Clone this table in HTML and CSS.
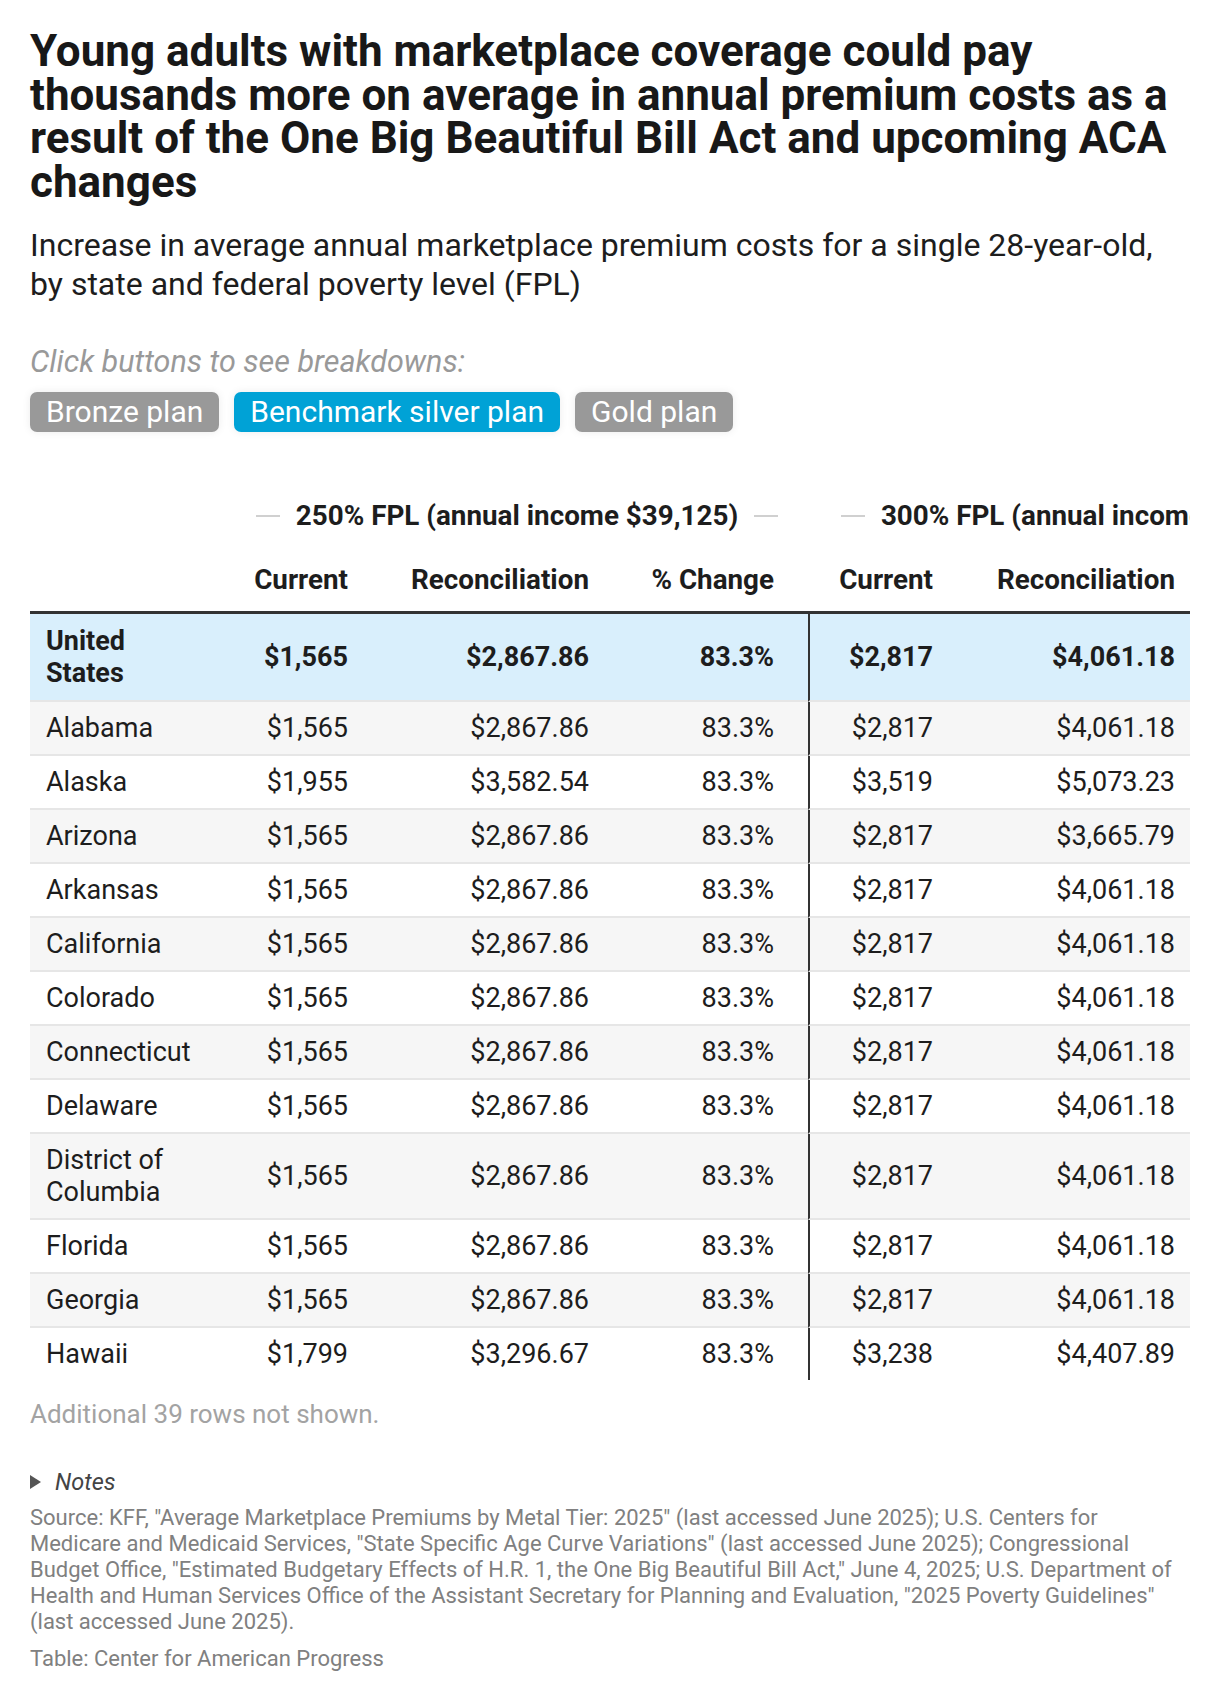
FILE: index.html
```html
<!DOCTYPE html>
<html lang="en">
<head>
<meta charset="utf-8">
<title>Young adults marketplace premiums</title>
<link rel="stylesheet" href="styles.css">
</head>
<body>
<div class="page">
  <h1 class="title">Young adults with marketplace coverage could pay thousands more on average in annual premium costs as a result of the One Big Beautiful Bill Act and upcoming ACA changes</h1>
  <p class="subtitle">Increase in average annual marketplace premium costs for a single 28-year-old, by state and federal poverty level (FPL)</p>

  <p class="hint">Click buttons to see breakdowns:</p>
  <div class="buttons">
    <span class="btn">Bronze plan</span>
    <span class="btn btn-active">Benchmark silver plan</span>
    <span class="btn">Gold plan</span>
  </div>

  <div class="table-wrap">
    <table class="data">
      <colgroup>
        <col class="w0"><col class="w1"><col class="w2"><col class="w3"><col class="w4"><col class="w5"><col class="w6">
      </colgroup>
      <thead>
        <tr class="group-row">
          <th></th>
          <th colspan="3" class="group"><span class="group-inner"><span class="dash"></span><span>250% FPL (annual income $39,125)</span><span class="dash"></span></span></th>
          <th colspan="3" class="group"><span class="group-inner"><span class="dash"></span><span>300% FPL (annual income $46,950)</span><span class="dash"></span></span></th>
        </tr>
        <tr class="head-row">
          <th></th>
          <th class="num">Current</th>
          <th class="num">Reconciliation</th>
          <th class="num c3">% Change</th>
          <th class="num">Current</th>
          <th class="num">Reconciliation</th>
          <th class="num c3"></th>
        </tr>
      </thead>
      <tbody>
        <tr class="us"><td class="state">United States</td><td class="num">$1,565</td><td class="num">$2,867.86</td><td class="num c3">83.3%</td><td class="num div">$2,817</td><td class="num">$4,061.18</td><td class="num c3"></td></tr>
        <tr class="odd"><td class="state">Alabama</td><td class="num">$1,565</td><td class="num">$2,867.86</td><td class="num c3">83.3%</td><td class="num div">$2,817</td><td class="num">$4,061.18</td><td class="num c3"></td></tr>
        <tr><td class="state">Alaska</td><td class="num">$1,955</td><td class="num">$3,582.54</td><td class="num c3">83.3%</td><td class="num div">$3,519</td><td class="num">$5,073.23</td><td class="num c3"></td></tr>
        <tr class="odd"><td class="state">Arizona</td><td class="num">$1,565</td><td class="num">$2,867.86</td><td class="num c3">83.3%</td><td class="num div">$2,817</td><td class="num">$3,665.79</td><td class="num c3"></td></tr>
        <tr><td class="state">Arkansas</td><td class="num">$1,565</td><td class="num">$2,867.86</td><td class="num c3">83.3%</td><td class="num div">$2,817</td><td class="num">$4,061.18</td><td class="num c3"></td></tr>
        <tr class="odd"><td class="state">California</td><td class="num">$1,565</td><td class="num">$2,867.86</td><td class="num c3">83.3%</td><td class="num div">$2,817</td><td class="num">$4,061.18</td><td class="num c3"></td></tr>
        <tr><td class="state">Colorado</td><td class="num">$1,565</td><td class="num">$2,867.86</td><td class="num c3">83.3%</td><td class="num div">$2,817</td><td class="num">$4,061.18</td><td class="num c3"></td></tr>
        <tr class="odd"><td class="state">Connecticut</td><td class="num">$1,565</td><td class="num">$2,867.86</td><td class="num c3">83.3%</td><td class="num div">$2,817</td><td class="num">$4,061.18</td><td class="num c3"></td></tr>
        <tr><td class="state">Delaware</td><td class="num">$1,565</td><td class="num">$2,867.86</td><td class="num c3">83.3%</td><td class="num div">$2,817</td><td class="num">$4,061.18</td><td class="num c3"></td></tr>
        <tr class="odd"><td class="state">District of Columbia</td><td class="num">$1,565</td><td class="num">$2,867.86</td><td class="num c3">83.3%</td><td class="num div">$2,817</td><td class="num">$4,061.18</td><td class="num c3"></td></tr>
        <tr><td class="state">Florida</td><td class="num">$1,565</td><td class="num">$2,867.86</td><td class="num c3">83.3%</td><td class="num div">$2,817</td><td class="num">$4,061.18</td><td class="num c3"></td></tr>
        <tr class="odd"><td class="state">Georgia</td><td class="num">$1,565</td><td class="num">$2,867.86</td><td class="num c3">83.3%</td><td class="num div">$2,817</td><td class="num">$4,061.18</td><td class="num c3"></td></tr>
        <tr class="last"><td class="state">Hawaii</td><td class="num">$1,799</td><td class="num">$3,296.67</td><td class="num c3">83.3%</td><td class="num div">$3,238</td><td class="num">$4,407.89</td><td class="num c3"></td></tr>
      </tbody>
    </table>
  </div>

  <p class="more">Additional 39 rows not shown.</p>

  <div class="notes"><span class="tri"></span><span>Notes</span></div>
  <p class="source">Source: KFF, "Average Marketplace Premiums by Metal Tier: 2025" (last accessed June 2025); U.S. Centers for Medicare and Medicaid Services, "State Specific Age Curve Variations" (last accessed June 2025); Congressional Budget Office, "Estimated Budgetary Effects of H.R. 1, the One Big Beautiful Bill Act," June 4, 2025; U.S. Department of Health and Human Services Office of the Assistant Secretary for Planning and Evaluation, "2025 Poverty Guidelines" (last accessed June 2025).</p>
  <p class="credit">Table: Center for American Progress</p>
</div>
</body>
</html>
```
FILE: styles.css
```css
html, body {
  margin: 0;
  padding: 0;
  background: #ffffff;
}

body {
  font-family: Roboto, "Liberation Sans", Arial, sans-serif;
  color: #1d1d1d;
}

.page {
  padding: 30px 30px 20px 30px;
}

.title {
  margin: 0;
  font-size: 44px;
  line-height: 43.5px;
  font-weight: 700;
  color: #181818;
}

.subtitle {
  margin: 22px 0 0 0;
  font-size: 32px;
  line-height: 39px;
  color: #1d1d1d;
}

.hint {
  margin: 39px 0 0 0;
  font-size: 30.5px;
  line-height: 37px;
  font-style: italic;
  color: #999999;
}

.buttons {
  display: flex;
  gap: 15px;
  margin-top: 12px;
}

.btn {
  display: inline-block;
  height: 40px;
  line-height: 40px;
  padding: 0 16px;
  border-radius: 7px;
  background: #999999;
  color: #ffffff;
  font-size: 30px;
  box-shadow: 0 0 9px rgba(0, 0, 0, 0.08);
}

.btn-active {
  background: #00a2d6;
}

.table-wrap {
  margin-top: 44px;
  width: 1160px;
  overflow: hidden;
}

.data {
  width: 1350px;
  table-layout: fixed;
  border-collapse: separate;
  border-spacing: 0;
  font-size: 27px;
  color: #1d1d1d;
}

.w0 { width: 180px; }
.w1 { width: 153px; }
.w2 { width: 241px; }
.w3 { width: 204px; }
.w4 { width: 140px; }
.w5 { width: 242px; }
.w6 { width: 190px; }

.data th,
.data td {
  padding: 10px 15px 10px 16px;
  line-height: 32px;
  vertical-align: middle;
}

.data th {
  font-weight: 700;
  font-size: 27.8px;
  color: #1d1d1d;
}

.group-row th,
.head-row th {
  padding-top: 0;
  padding-bottom: 0;
  box-sizing: border-box;
}

.group-row th {
  height: 72px;
}

.head-row th {
  height: 66px;
  border-bottom: 3px solid #333333;
}

.data th.group {
  padding-left: 16px;
  padding-right: 0;
  text-align: center;
}

.group-inner {
  display: inline-flex;
  align-items: center;
  gap: 16px;
  white-space: nowrap;
}

.dash {
  display: inline-block;
  width: 24px;
  height: 2px;
  background: #d0d0d0;
}

.num {
  text-align: right;
}

.data .c3 {
  padding-right: 34px;
}

.state {
  text-align: left;
}

.data td {
  border-bottom: 2px solid #e6e6e6;
}

.data td.div {
  border-left: 2px solid #333333;
}

.data tr.odd td {
  background: #f6f6f6;
}

.data tr.us td {
  background: #d9effc;
  font-weight: 700;
  padding-top: 11px;
  padding-bottom: 11px;
}

.data tr.last td {
  border-bottom: none;
}

.more {
  margin: 18px 0 0 0;
  font-size: 26px;
  line-height: 33px;
  color: #a3a3a3;
}

.notes {
  margin-top: 38px;
  display: flex;
  align-items: center;
  gap: 14px;
  font-size: 23.5px;
  line-height: 26px;
  font-style: italic;
  color: #444444;
}

.tri {
  display: inline-block;
  width: 0;
  height: 0;
  border-top: 7px solid transparent;
  border-bottom: 7px solid transparent;
  border-left: 11px solid #555555;
}

.source {
  margin: 10px 0 0 0;
  font-size: 22px;
  line-height: 26px;
  color: #808080;
}

.credit {
  margin: 11px 0 0 0;
  font-size: 22px;
  line-height: 26px;
  color: #808080;
}
```
